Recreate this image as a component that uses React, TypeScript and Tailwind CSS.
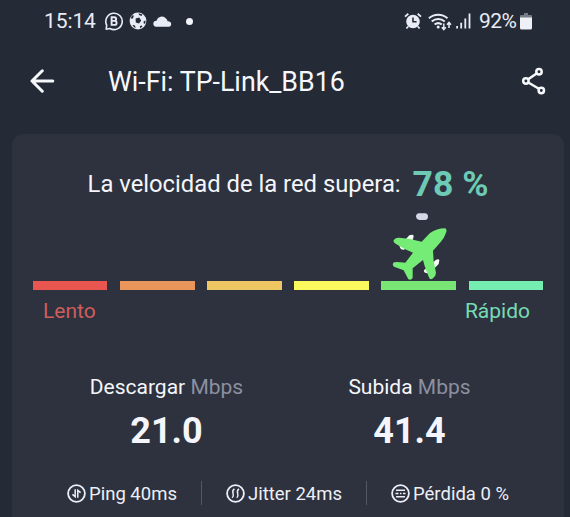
import type { ReactNode } from 'react';

interface StatProps {
    icon: ReactNode;
    label: string;
}

interface SpeedProps {
    label: string;
    value: string;
}

const segments = ['bg-[#e8564f]', 'bg-[#ea965b]', 'bg-[#eec763]', 'bg-[#fbf95e]', 'bg-[#79e574]', 'bg-[#75edb0]'];

function StatusBar() {
    return (
        <div className="flex h-[42px] items-center justify-between pl-[44px] pr-[38px] text-[21px] text-[#e9ecf5]">
            <div className="flex items-center">
                <span className="w-[53px] pt-px tracking-[-0.1px]">15:14</span>
                <svg className="ml-[7px] h-5 w-5" viewBox="0 0 20 20" fill="none" stroke="currentColor">
                    <path d="M2.2 18.2l.5-4.1a8.2 8.2 0 1 1 3.2 3.4z" strokeWidth="1.6" strokeLinejoin="round" />
                    <path d="M7.6 6.2h2.7a1.8 1.8 0 0 1 0 3.7H7.6zm0 3.7h3a2 2 0 0 1 0 4h-3z" strokeWidth="1.9" />
                </svg>
                <svg className="ml-[5px] h-[18px] w-[18px]" viewBox="0 0 18 18">
                    <circle cx="9" cy="9" r="8.4" fill="#e9ecf5" />
                    <path d="M6.6 6.6l3.6-1 2 2.9-2.1 2.9-3.3-1zM1.4 6.2l2-3 1.6.6-1.5 3zM9.6 1.3l3.8 1.1-.8 1.5-2.6-.9zM16.6 8.6l-.3 2.9-1.4.3-.4-2.4zM3.4 12.9l2.3.3 1.1 2.6-1.8-.5zM10.8 14.2l1.9-.8.8 1.2-2.3 1.6z" fill="#252a37" />
                </svg>
                <svg className="ml-[6px] h-3 w-5" viewBox="0 0 20 12" fill="currentColor">
                    <path d="M3.2 11.7a3 3 0 0 1 .3-6A5.6 5.6 0 0 1 13 3.4a4.8 4.8 0 0 1 1.6 2.9 2.9 2.9 0 0 1 1.8.2 2.7 2.7 0 0 1-.3 5.2z" />
                </svg>
                <span className="ml-[13px] h-[7px] w-[7px] rounded-full bg-[#f4f5fa]" />
            </div>
            <div className="flex items-center">
                <svg className="h-[18px] w-[18px]" viewBox="0 0 18 18" fill="none" stroke="currentColor">
                    <circle cx="9" cy="9.5" r="6.8" fill="currentColor" stroke="none" />
                    <path d="M1 4.6l3.3-2.9M17 4.6l-3.3-2.9M4.2 14.5l-1.8 2M13.8 14.5l1.8 2" strokeWidth="1.8" />
                    <path d="M9 5.4v4.4h3.6" stroke="#252a37" strokeWidth="1.6" />
                </svg>
                <svg className="ml-[6px] h-[19px] w-6" viewBox="0 0 24 19" fill="none" stroke="currentColor" strokeWidth="2">
                    <path d="M.9 6.2a14 14 0 0 1 18.6 0M3.7 9.4a9.8 9.8 0 0 1 13 0M6.6 12.6a5.6 5.6 0 0 1 7.2 0" />
                    <circle cx="10.2" cy="15" r="1.5" fill="currentColor" stroke="none" />
                    <path d="M15.8 11.5v5.5M13.8 15.2l2 2.3 2-2.3M21 16V11M19 12.8l2-2.3 2 2.3" strokeWidth="1.5" />
                </svg>
                <svg className="ml-[4px] h-4 w-[15px]" viewBox="0 0 15 16" fill="currentColor">
                    <path d="M.2 13h1.8v2.6H.2zM4.3 9.7h1.8v5.9H4.3zM8.4 5.4h1.8v10.2H8.4zM12.6.5h1.8v15.1h-1.8z" />
                </svg>
                <span className="ml-[8px] w-[40px] whitespace-nowrap pt-px tracking-[-0.5px]">92%</span>
                <svg className="ml-[1px] h-[17px] w-[12px]" viewBox="0 0 12 17">
                    <path d="M4 0h4v2h3a1 1 0 0 1 1 1v2H0V3a1 1 0 0 1 1-1h3z" fill="#777b85" />
                    <path d="M0 4.5h12V15a1.5 1.5 0 0 1-1.5 1.5h-9A1.5 1.5 0 0 1 0 15z" fill="#eef0f7" />
                </svg>
            </div>
        </div>
    );
}

function Header() {
    return (
        <div className="flex h-20 items-center pl-[30px] pr-[23px] text-[#f6f8fc]">
            <button className="-mt-[3px]">
                <svg className="h-6 w-[25px]" viewBox="0 0 25 24" fill="none" stroke="currentColor" strokeWidth="3" strokeLinecap="round" strokeLinejoin="round">
                    <path d="M22.8 12H2.2M12.3 1.8L2 12l10.3 10.2" />
                </svg>
            </button>
            <h1 className="ml-[53px] flex-1 whitespace-nowrap pt-px text-[26.8px]">Wi-Fi: TP-Link_BB16</h1>
            <button className="-mt-[3px]">
                <svg className="h-7 w-[25px]" viewBox="0 0 25 28" fill="none" stroke="currentColor" strokeWidth="2.5">
                    <circle cx="17" cy="4.7" r="2.7" />
                    <circle cx="3.9" cy="14" r="2.7" />
                    <circle cx="19.3" cy="23.5" r="2.7" />
                    <path d="M6.2 12.3l8.4-5.8M6.3 15.5l10.6 6.3" />
                </svg>
            </button>
        </div>
    );
}

function Plane() {
    return (
        <svg className="absolute bottom-0 left-[378px] h-[72px] w-[60px]" viewBox="60 147 180 216">
            <path d="M147 160h18q9 1 9 10t-9 10h-17q-9-2-10-10 0-9 9-10z" fill="#d5d6e6" />
            <g fill="#f3fbf3">
                <path d="M105 240l13-14q12-4 13 2l-2 10-8 9zM88 257l14-6 8 12-8 6q-9 1-11-4z" />
                <path d="M188 309l9-9q10-5 11 1l-2 11-14 14zM174 322l-12 8q-2 8 7 9l8 2z" />
            </g>
            <path
                d="M225 205Q231 206 229 216Q223 234 212 246L189 272L191 304L198 338Q198 347 189 355Q180 362 176 350L164 318L159 300L128 325L128 353Q124 362 115 358L101 331L72 320Q66 316 70 308Q73 304 106 308L129 278L104 267L78 252Q67 246 72 239Q77 232 88 233L120 237L155 245L180 219Q200 205 225 205Z"
                fill="#74ec76"
            />
        </svg>
    );
}

function Speed({ label, value }: SpeedProps) {
    return (
        <div className="text-center text-[#f4f6fb]">
            <p className="whitespace-nowrap text-[21px] leading-6">
                {label} <span className="text-[#8b90a1]">Mbps</span>
            </p>
            <p className="mt-[12px] text-[36px] font-bold leading-10">{value}</p>
        </div>
    );
}

function Stat({ icon, label }: StatProps) {
    return (
        <div className="flex items-center gap-[3px] whitespace-nowrap">
            <svg className="-mt-[2px] h-[19px] w-[19px]" viewBox="0 0 19 19" fill="none" stroke="currentColor" strokeWidth="1.5">
                <circle cx="9.5" cy="9.5" r="8.4" strokeWidth="1.8" />
                {icon}
            </svg>
            <span className="pt-[2px]">{label}</span>
        </div>
    );
}

export default function App() {
    return (
        <div className="h-[517px] w-[570px] overflow-hidden bg-[#252a37] font-['Roboto',sans-serif]">
            <StatusBar />
            <Header />
            <div className="ml-[12px] mt-[12px] h-[400px] w-[552px] rounded-xl bg-[#2e323e]">
                <div className="flex h-[100px] items-center justify-center whitespace-nowrap text-[#f4f6fb]">
                    <span className="pt-px text-[23.8px]">La velocidad de la red supera:</span>
                    <span className="ml-[12px] mt-[2px] text-[35.5px] font-bold text-[#6dcbb5]">78 %</span>
                </div>

                {/* Speed scale */}
                <div className="relative h-[47px]">
                    <Plane />
                </div>
                <div className="grid grid-cols-6 gap-[12.7px] px-[21px]">
                    {segments.map((color) => (
                        <div key={color} className={`h-[9px] ${color}`} />
                    ))}
                </div>
                <div className="mt-[9px] flex justify-between pl-[31px] pr-[34px] text-[21px] leading-6">
                    <span className="text-[#cf5d5c]">Lento</span>
                    <span className="text-[#76dcb5]">Rápido</span>
                </div>

                <div className="mt-[52px] grid grid-cols-2 px-[33px]">
                    <Speed label="Descargar" value="21.0" />
                    <Speed label="Subida" value="41.4" />
                </div>

                <div className="mt-[31px] flex h-6 items-center justify-center gap-[24px] text-[18.5px] text-[#eceff7]">
                    <Stat label="Ping 40ms" icon={<path d="M8.2 5.3v7.4L5.4 10.4M10.8 13.7V6.3l2.8 2.3" />} />
                    <span className="-mt-[3px] h-6 w-px bg-[#535865]" />
                    <Stat label="Jitter 24ms" icon={<path d="M8.4 4.8c-4.4 3.2 1.4 5.6-2.2 9M13 4.8c-4.4 3.2 1.4 5.6-2.2 9" />} />
                    <span className="-mt-[3px] h-6 w-px bg-[#535865]" />
                    <Stat label="Pérdida 0 %" icon={<path d="M5 6.2h9M4.5 9.5h3M9 9.5h1.5M12 9.5h2.5M5 12.8h9" />} />
                </div>
            </div>
        </div>
    );
}
